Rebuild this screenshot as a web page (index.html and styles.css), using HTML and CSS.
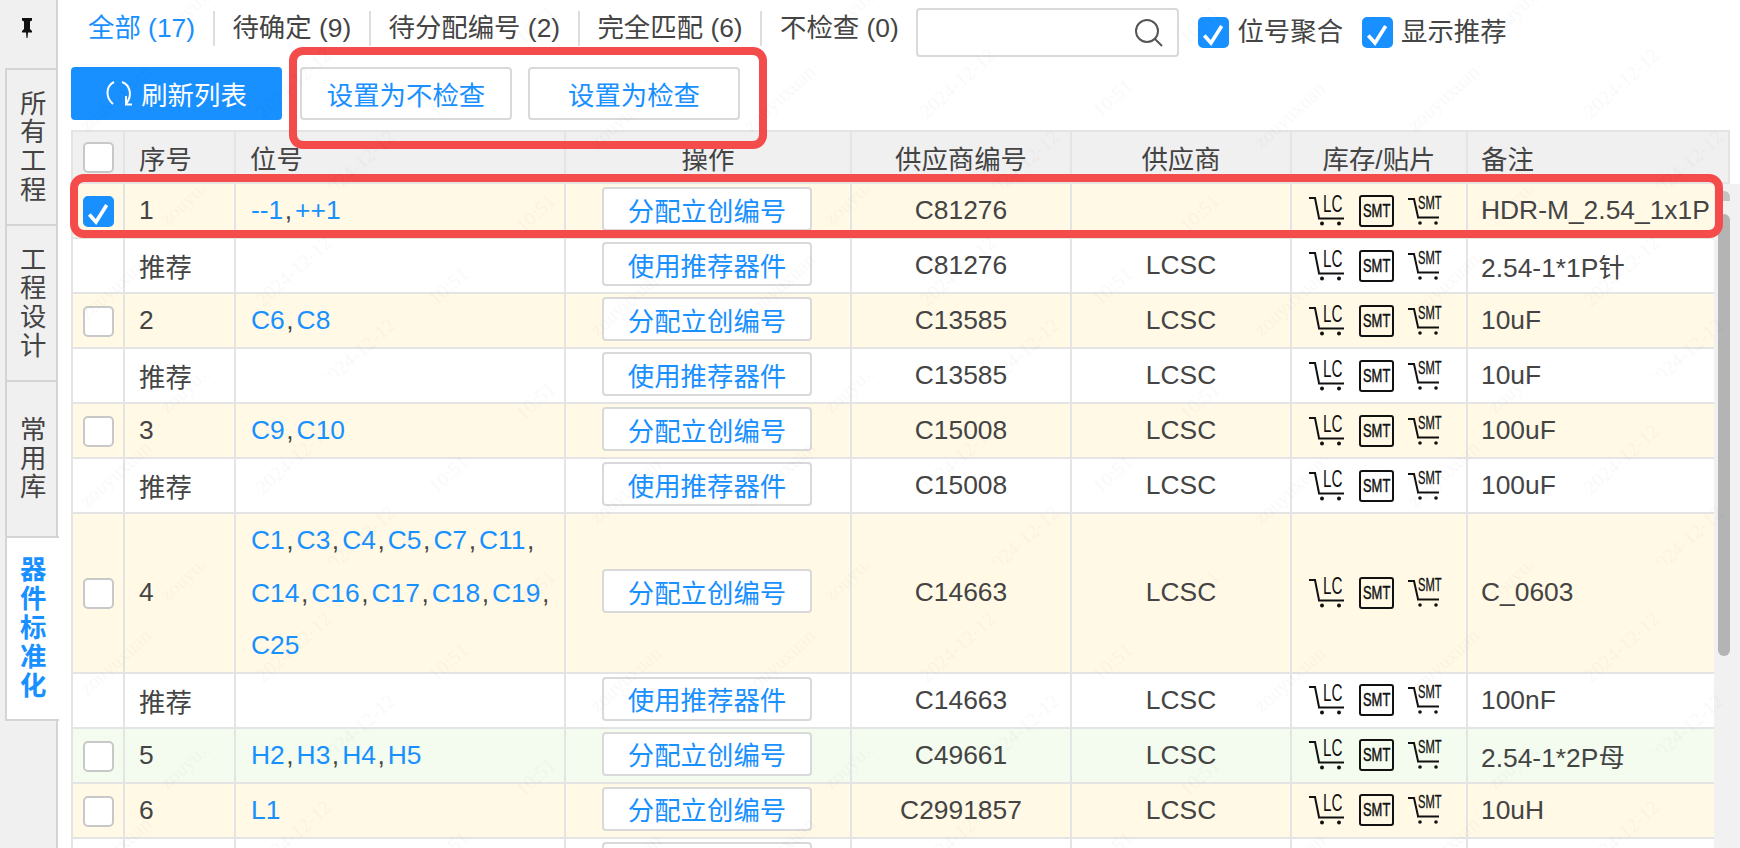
FILE: index.html
```html
<!DOCTYPE html>
<html lang="zh-CN">
<head>
  <meta charset="utf-8">
  <title>器件标准化</title>
  <link rel="stylesheet" href="styles.css">
</head>
<body>
  <svg class="defs" width="0" height="0">
    <symbol id="cart-lc" viewBox="0 0 36 30">
      <path class="line" d="M0 2H6L10 22"/>
      <path class="line" d="M9 22.500H35"/>
      <circle cx="13" cy="27.500" r="2"/>
      <circle cx="30" cy="27.500" r="2"/>
    </symbol>
    <symbol id="smt-frame" viewBox="0 0 36 32">
      <rect class="line" x="1" y="1" width="33" height="30" rx="2"/>
    </symbol>
    <symbol id="cart-smt" viewBox="0 0 35 28">
      <path class="line" d="M0 2H6L10 20"/>
      <path class="line" d="M9 20.500H31"/>
      <circle cx="12" cy="26" r="1.800"/>
      <circle cx="28" cy="26" r="1.800"/>
    </symbol>
    <symbol id="icon-check" viewBox="0 0 27 27">
      <path d="M4.300 16.500L11 24L21.700 7" fill="none" stroke="#fff" stroke-width="3.600"/>
    </symbol>
  </svg>

  <aside class="sidebar">
    <div class="pin">
      <svg width="10" height="20" viewBox="0 0 10 20"><path d="M0 0H10V2.500L8 3.500V11L10 13V14.500H6L5.500 20H4.500L4 14.500H0V13L2 11V3.500L0 2.500Z" fill="#111"/></svg>
    </div>
    <div class="tab">所有工程</div>
    <div class="tab">工程设计</div>
    <div class="tab">常用库</div>
    <div class="tab active">器件标准化</div>
  </aside>

  <main class="main">
    <div class="filter-bar">
      <ul class="filters">
        <li class="current">全部 (17)</li>
        <li>待确定 (9)</li>
        <li>待分配编号 (2)</li>
        <li>完全匹配 (6)</li>
        <li>不检查 (0)</li>
      </ul>
      <div class="search">
        <svg width="30" height="30" viewBox="0 0 30 30"><circle cx="13" cy="13" r="11" fill="none" stroke="#555" stroke-width="2"/><path d="M21 21l7 7" stroke="#555" stroke-width="2"/></svg>
      </div>
      <label class="option"><span class="box on"><svg><use href="#icon-check"/></svg></span>位号聚合</label>
      <label class="option"><span class="box on"><svg><use href="#icon-check"/></svg></span>显示推荐</label>
    </div>

    <div class="toolbar">
      <button class="btn primary">
        <svg width="28" height="26" viewBox="0 0 28 26"><path d="M8 1C0 5 -1 16 7 23M16 1C24 4 27 14 20 23M20 15V23.500H26" fill="none" stroke="#fff" stroke-width="2"/></svg>
        刷新列表
      </button>
      <button class="btn">设置为不检查</button>
      <button class="btn">设置为检查</button>
    </div>

    <table class="grid head">
      <colgroup><col class="c-check"><col class="c-no"><col class="c-ref"><col class="c-op"><col class="c-code"><col class="c-sup"><col class="c-icons"><col class="c-note-head"></colgroup>
      <tr>
        <th><span class="box"></span></th>
        <th class="left">序号</th>
        <th class="left">位号</th>
        <th>操作</th>
        <th>供应商编号</th>
        <th>供应商</th>
        <th>库存/贴片</th>
        <th class="left note">备注</th>
      </tr>
    </table>

    <div class="body-wrap">
      <table class="grid">
        <colgroup><col class="c-check"><col class="c-no"><col class="c-ref"><col class="c-op"><col class="c-code"><col class="c-sup"><col class="c-icons"><col class="c-note"></colgroup>
        <tr class="yellow">
          <td><span class="box on"><svg><use href="#icon-check"/></svg></span></td>
          <td class="left">1</td>
          <td class="refs"><a>--1<i>,</i></a><a>++1</a></td>
          <td class="op"><button class="assign">分配立创编号</button></td>
          <td>C81276</td>
          <td></td>
          <td><div class="icons"><span class="ico lc"><svg><use href="#cart-lc"/></svg><b>LC</b></span><span class="ico frame"><svg><use href="#smt-frame"/></svg><b>SMT</b></span><span class="ico smt"><svg><use href="#cart-smt"/></svg><b>SMT</b></span></div></td>
          <td class="left note">HDR-M_2.54_1x1P</td>
        </tr>
        <tr>
          <td></td>
          <td class="left">推荐</td>
          <td></td>
          <td class="op"><button class="assign">使用推荐器件</button></td>
          <td>C81276</td>
          <td>LCSC</td>
          <td><div class="icons"><span class="ico lc"><svg><use href="#cart-lc"/></svg><b>LC</b></span><span class="ico frame"><svg><use href="#smt-frame"/></svg><b>SMT</b></span><span class="ico smt"><svg><use href="#cart-smt"/></svg><b>SMT</b></span></div></td>
          <td class="left note">2.54-1*1P针</td>
        </tr>
        <tr class="yellow">
          <td><span class="box"></span></td>
          <td class="left">2</td>
          <td class="refs"><a>C6<i>,</i></a><a>C8</a></td>
          <td class="op"><button class="assign">分配立创编号</button></td>
          <td>C13585</td>
          <td>LCSC</td>
          <td><div class="icons"><span class="ico lc"><svg><use href="#cart-lc"/></svg><b>LC</b></span><span class="ico frame"><svg><use href="#smt-frame"/></svg><b>SMT</b></span><span class="ico smt"><svg><use href="#cart-smt"/></svg><b>SMT</b></span></div></td>
          <td class="left note">10uF</td>
        </tr>
        <tr>
          <td></td>
          <td class="left">推荐</td>
          <td></td>
          <td class="op"><button class="assign">使用推荐器件</button></td>
          <td>C13585</td>
          <td>LCSC</td>
          <td><div class="icons"><span class="ico lc"><svg><use href="#cart-lc"/></svg><b>LC</b></span><span class="ico frame"><svg><use href="#smt-frame"/></svg><b>SMT</b></span><span class="ico smt"><svg><use href="#cart-smt"/></svg><b>SMT</b></span></div></td>
          <td class="left note">10uF</td>
        </tr>
        <tr class="yellow">
          <td><span class="box"></span></td>
          <td class="left">3</td>
          <td class="refs"><a>C9<i>,</i></a><a>C10</a></td>
          <td class="op"><button class="assign">分配立创编号</button></td>
          <td>C15008</td>
          <td>LCSC</td>
          <td><div class="icons"><span class="ico lc"><svg><use href="#cart-lc"/></svg><b>LC</b></span><span class="ico frame"><svg><use href="#smt-frame"/></svg><b>SMT</b></span><span class="ico smt"><svg><use href="#cart-smt"/></svg><b>SMT</b></span></div></td>
          <td class="left note">100uF</td>
        </tr>
        <tr>
          <td></td>
          <td class="left">推荐</td>
          <td></td>
          <td class="op"><button class="assign">使用推荐器件</button></td>
          <td>C15008</td>
          <td>LCSC</td>
          <td><div class="icons"><span class="ico lc"><svg><use href="#cart-lc"/></svg><b>LC</b></span><span class="ico frame"><svg><use href="#smt-frame"/></svg><b>SMT</b></span><span class="ico smt"><svg><use href="#cart-smt"/></svg><b>SMT</b></span></div></td>
          <td class="left note">100uF</td>
        </tr>
        <tr class="yellow">
          <td><span class="box"></span></td>
          <td class="left">4</td>
          <td class="refs"><a>C1<i>,</i></a><a>C3<i>,</i></a><a>C4<i>,</i></a><a>C5<i>,</i></a><a>C7<i>,</i></a><a>C11<i>,</i></a><a>C14<i>,</i></a><a>C16<i>,</i></a><a>C17<i>,</i></a><a>C18<i>,</i></a><a>C19<i>,</i></a><a>C25</a></td>
          <td class="op"><button class="assign">分配立创编号</button></td>
          <td>C14663</td>
          <td>LCSC</td>
          <td><div class="icons"><span class="ico lc"><svg><use href="#cart-lc"/></svg><b>LC</b></span><span class="ico frame"><svg><use href="#smt-frame"/></svg><b>SMT</b></span><span class="ico smt"><svg><use href="#cart-smt"/></svg><b>SMT</b></span></div></td>
          <td class="left note">C_0603</td>
        </tr>
        <tr>
          <td></td>
          <td class="left">推荐</td>
          <td></td>
          <td class="op"><button class="assign">使用推荐器件</button></td>
          <td>C14663</td>
          <td>LCSC</td>
          <td><div class="icons"><span class="ico lc"><svg><use href="#cart-lc"/></svg><b>LC</b></span><span class="ico frame"><svg><use href="#smt-frame"/></svg><b>SMT</b></span><span class="ico smt"><svg><use href="#cart-smt"/></svg><b>SMT</b></span></div></td>
          <td class="left note">100nF</td>
        </tr>
        <tr class="green">
          <td><span class="box"></span></td>
          <td class="left">5</td>
          <td class="refs"><a>H2<i>,</i></a><a>H3<i>,</i></a><a>H4<i>,</i></a><a>H5</a></td>
          <td class="op"><button class="assign">分配立创编号</button></td>
          <td>C49661</td>
          <td>LCSC</td>
          <td><div class="icons"><span class="ico lc"><svg><use href="#cart-lc"/></svg><b>LC</b></span><span class="ico frame"><svg><use href="#smt-frame"/></svg><b>SMT</b></span><span class="ico smt"><svg><use href="#cart-smt"/></svg><b>SMT</b></span></div></td>
          <td class="left note">2.54-1*2P母</td>
        </tr>
        <tr class="yellow">
          <td><span class="box"></span></td>
          <td class="left">6</td>
          <td class="refs"><a>L1</a></td>
          <td class="op"><button class="assign">分配立创编号</button></td>
          <td>C2991857</td>
          <td>LCSC</td>
          <td><div class="icons"><span class="ico lc"><svg><use href="#cart-lc"/></svg><b>LC</b></span><span class="ico frame"><svg><use href="#smt-frame"/></svg><b>SMT</b></span><span class="ico smt"><svg><use href="#cart-smt"/></svg><b>SMT</b></span></div></td>
          <td class="left note">10uH</td>
        </tr>
        <tr class="last">
          <td></td>
          <td></td>
          <td></td>
          <td class="op"><button class="assign"></button></td>
          <td></td>
          <td></td>
          <td></td>
          <td></td>
        </tr>
      </table>
      <div class="scrollbar">
        <div class="arrow"></div>
        <div class="thumb"></div>
      </div>
    </div>
  </main>

  <!-- red marks drawn over the screenshot -->
  <div class="mark mark-buttons"></div>
  <div class="mark mark-row"></div>

  <svg class="watermark" width="1740" height="848">
    <defs>
      <pattern id="wm" width="664" height="188" patternUnits="userSpaceOnUse" patternTransform="translate(40 0)">
        <text x="0" y="0" transform="translate(80 103) rotate(-42)" text-anchor="middle">zouyuxuan</text>
        <text x="0" y="0" transform="translate(258 88) rotate(-42)" text-anchor="middle">2024-12-12</text>
        <text x="0" y="0" transform="translate(413 103) rotate(-42)" text-anchor="middle">10:51</text>
        <text x="0" y="0" transform="translate(160 9) rotate(-42)" text-anchor="middle">zouyuxuan</text>
        <text x="0" y="0" transform="translate(322 170) rotate(-42)" text-anchor="middle">2024-12-12</text>
        <text x="0" y="0" transform="translate(500 30) rotate(-42)" text-anchor="middle">10:51</text>
        <text x="0" y="0" transform="translate(590 120) rotate(-42)" text-anchor="middle">zouyuxuan</text>
      </pattern>
    </defs>
    <rect width="1740" height="848" fill="url(#wm)"/>
  </svg>
</body>
</html>
```

FILE: styles.css
```css
* {
  box-sizing: border-box;
}
html, body {
  height: 100%;
}
body {
  margin: 0;
  display: flex;
  overflow: hidden;
  font-family: "Liberation Sans", "Noto Sans CJK SC", sans-serif;
  font-size: 26.4px;
  color: #444;
  background-color: #fff;
}
svg.defs {
  position: absolute;
}
svg.defs .line {
  fill: none;
  stroke: #111;
  stroke-width: 2;
}
svg.defs circle {
  fill: #111;
}

/* left tabs */
.sidebar {
  flex: none;
  width: 58px;
  padding-left: 5px;
  background-color: #f0f0f0;
  border-right: 2px solid #d4d4d4;
}
.pin {
  height: 68px;
  margin-left: -5px;
  padding: 18px 0 0 22px;
}
.pin svg {
  display: block;
}
.tab {
  display: flex;
  align-items: center;
  width: 53px;
  height: 156px;
  padding: 0 10px 0 13px;
  line-height: 28.6px;
  border-top: 2px solid #d4d4d4;
  border-left: 2px solid #d4d4d4;
}
.tab.active {
  width: 54px;
  height: 185px;
  line-height: 29px;
  font-weight: bold;
  color: #1890ff;
  background-color: #fff;
  border-bottom: 2px solid #d4d4d4;
}

.main {
  flex: 1;
  min-width: 0;
  padding-left: 13px;
}

/* filter row */
.filter-bar {
  display: flex;
  align-items: flex-start;
  height: 67px;
  padding-top: 8px;
}
.filters {
  display: flex;
  list-style-type: none;
  margin: 3px 0 0;
  padding: 0;
}
.filters li {
  padding: 0 17.7px;
  line-height: 35px;
  border-right: 2px solid #ddd;
  white-space: nowrap;
}
.filters li:first-child {
  padding-left: 17px;
}
.filters li:last-child {
  border-right: 0;
}
.filters li.current {
  color: #1890ff;
}
.search {
  display: flex;
  align-items: center;
  justify-content: flex-end;
  width: 263px;
  height: 49px;
  padding-right: 13px;
  background-color: #fff;
  border: 2px solid #d9d9d9;
  border-radius: 4px;
}
.option {
  display: flex;
  align-items: center;
  margin: 9px 0 0 19px;
  line-height: 31px;
}
.option .box {
  margin-right: 8px;
}

/* checkbox */
.box {
  display: inline-block;
  width: 31px;
  height: 31px;
  vertical-align: middle;
  background-color: #fff;
  border: 2px solid #c8c8c8;
  border-radius: 5px;
}
.box.on {
  background-color: #1890ff;
  border-color: #1890ff;
}
.box svg {
  display: block;
  width: 27px;
  height: 27px;
}

/* buttons */
.toolbar {
  display: flex;
  height: 63px;
}
.btn {
  width: 212px;
  height: 53px;
  margin-right: 16px;
  padding: 0;
  font: inherit;
  color: #1890ff;
  background-color: #fff;
  border: 2px solid #d9d9d9;
  border-radius: 4px;
}
.btn.primary {
  display: flex;
  align-items: center;
  justify-content: center;
  gap: 7px;
  width: 211px;
  margin-right: 18px;
  color: #fff;
  background-color: #1890ff;
  border-color: #1890ff;
}

/* table */
.grid {
  flex: none;
  table-layout: fixed;
  border-spacing: 0;
  border-left: 2px solid #e4e4e4;
}
.grid.head {
  width: 1659px;
  background-color: #f0f0f0;
  border-top: 2px solid #e4e4e4;
}
.body-wrap {
  display: flex;
}
.body-wrap .grid {
  width: 1643px;
}
.c-check { width: 52px; }
.c-no { width: 111px; }
.c-ref { width: 330px; }
.c-op { width: 286px; }
.c-code { width: 220px; }
.c-sup { width: 220px; }
.c-icons { width: 176px; }
.c-note { width: 246px; }
.c-note-head { width: 262px; }

.grid th, .grid td {
  height: 55px;
  padding: 0;
  font-weight: normal;
  text-align: center;
  border-right: 2px solid #e4e4e4;
  border-bottom: 2px solid #e4e4e4;
}
.grid th {
  height: 52px;
}
.grid .left {
  padding-left: 14px;
  text-align: left;
  white-space: nowrap;
}
.grid .left.note {
  padding-left: 13px;
}
.grid td.note {
  border-right: 0;
}
.grid .last td:last-child {
  border-right: 0;
}
.yellow td {
  background-color: #fff9e6;
}
.green td {
  background-color: #f3fcee;
}
.grid td.refs {
  padding: 0 4px 0 15px;
  line-height: 52.6px;
  text-align: left;
  color: #1890ff;
}
.refs a {
  display: inline-block;
}
.refs i {
  margin: 0 3px 0 1.5px;
  font-style: normal;
  color: #444;
}
.grid td.op {
  padding-right: 2px;
}
.assign {
  display: block;
  width: 210px;
  height: 44px;
  margin: 0 auto 3px;
  padding: 0;
  font: inherit;
  color: #1890ff;
  background-color: #fff;
  border: 2px solid #d9d9d9;
  border-radius: 4px;
}

/* cart and SMT icons */
.icons {
  display: flex;
  align-items: center;
  justify-content: center;
  padding-right: 6px;
}
.ico {
  position: relative;
  display: block;
}
.ico svg {
  display: block;
  width: 100%;
  height: 100%;
}
.ico b {
  position: absolute;
  font-weight: normal;
  line-height: 1;
  color: #111;
  transform-origin: 0 0;
}
.ico.lc {
  width: 36px;
  height: 30px;
}
.ico.lc b {
  left: 14px;
  top: -3px;
  font-size: 23px;
  transform: scaleX(0.66);
}
.ico.frame {
  width: 36px;
  height: 32px;
  margin: 0 13px 0 14px;
}
.ico.frame b {
  left: 4px;
  top: 6px;
  font-size: 19px;
  -webkit-text-stroke: 0.5px #111;
  transform: scaleX(0.68);
}
.ico.smt {
  width: 35px;
  height: 28px;
}
.ico.smt b {
  left: 10px;
  top: -3px;
  font-size: 18px;
  -webkit-text-stroke: 0.3px #111;
  transform: scaleX(0.62);
}

.scrollbar {
  flex: none;
  width: 26px;
  height: 665px;
  padding: 7px 10px 0 4px;
  background-color: #f1f1f1;
}
.arrow {
  height: 10px;
  margin-bottom: 13px;
  background-color: #c4c4c4;
  border-radius: 6px 6px 0 0;
}
.thumb {
  height: 442px;
  background-color: #b4b4b4;
  border-radius: 6px;
}

/* annotation overlays */
.mark {
  position: absolute;
  border: 8px solid #f44b4b;
  border-radius: 14px;
}
.mark-buttons {
  left: 289px;
  top: 47px;
  width: 478px;
  height: 102px;
}
.mark-row {
  left: 70px;
  top: 174px;
  width: 1653px;
  height: 64px;
}
.watermark {
  position: absolute;
  left: 0;
  top: 0;
  pointer-events: none;
}
.watermark text {
  font-family: "Liberation Serif", serif;
  font-size: 20px;
  fill: #000;
  fill-opacity: 0.025;
}
```
